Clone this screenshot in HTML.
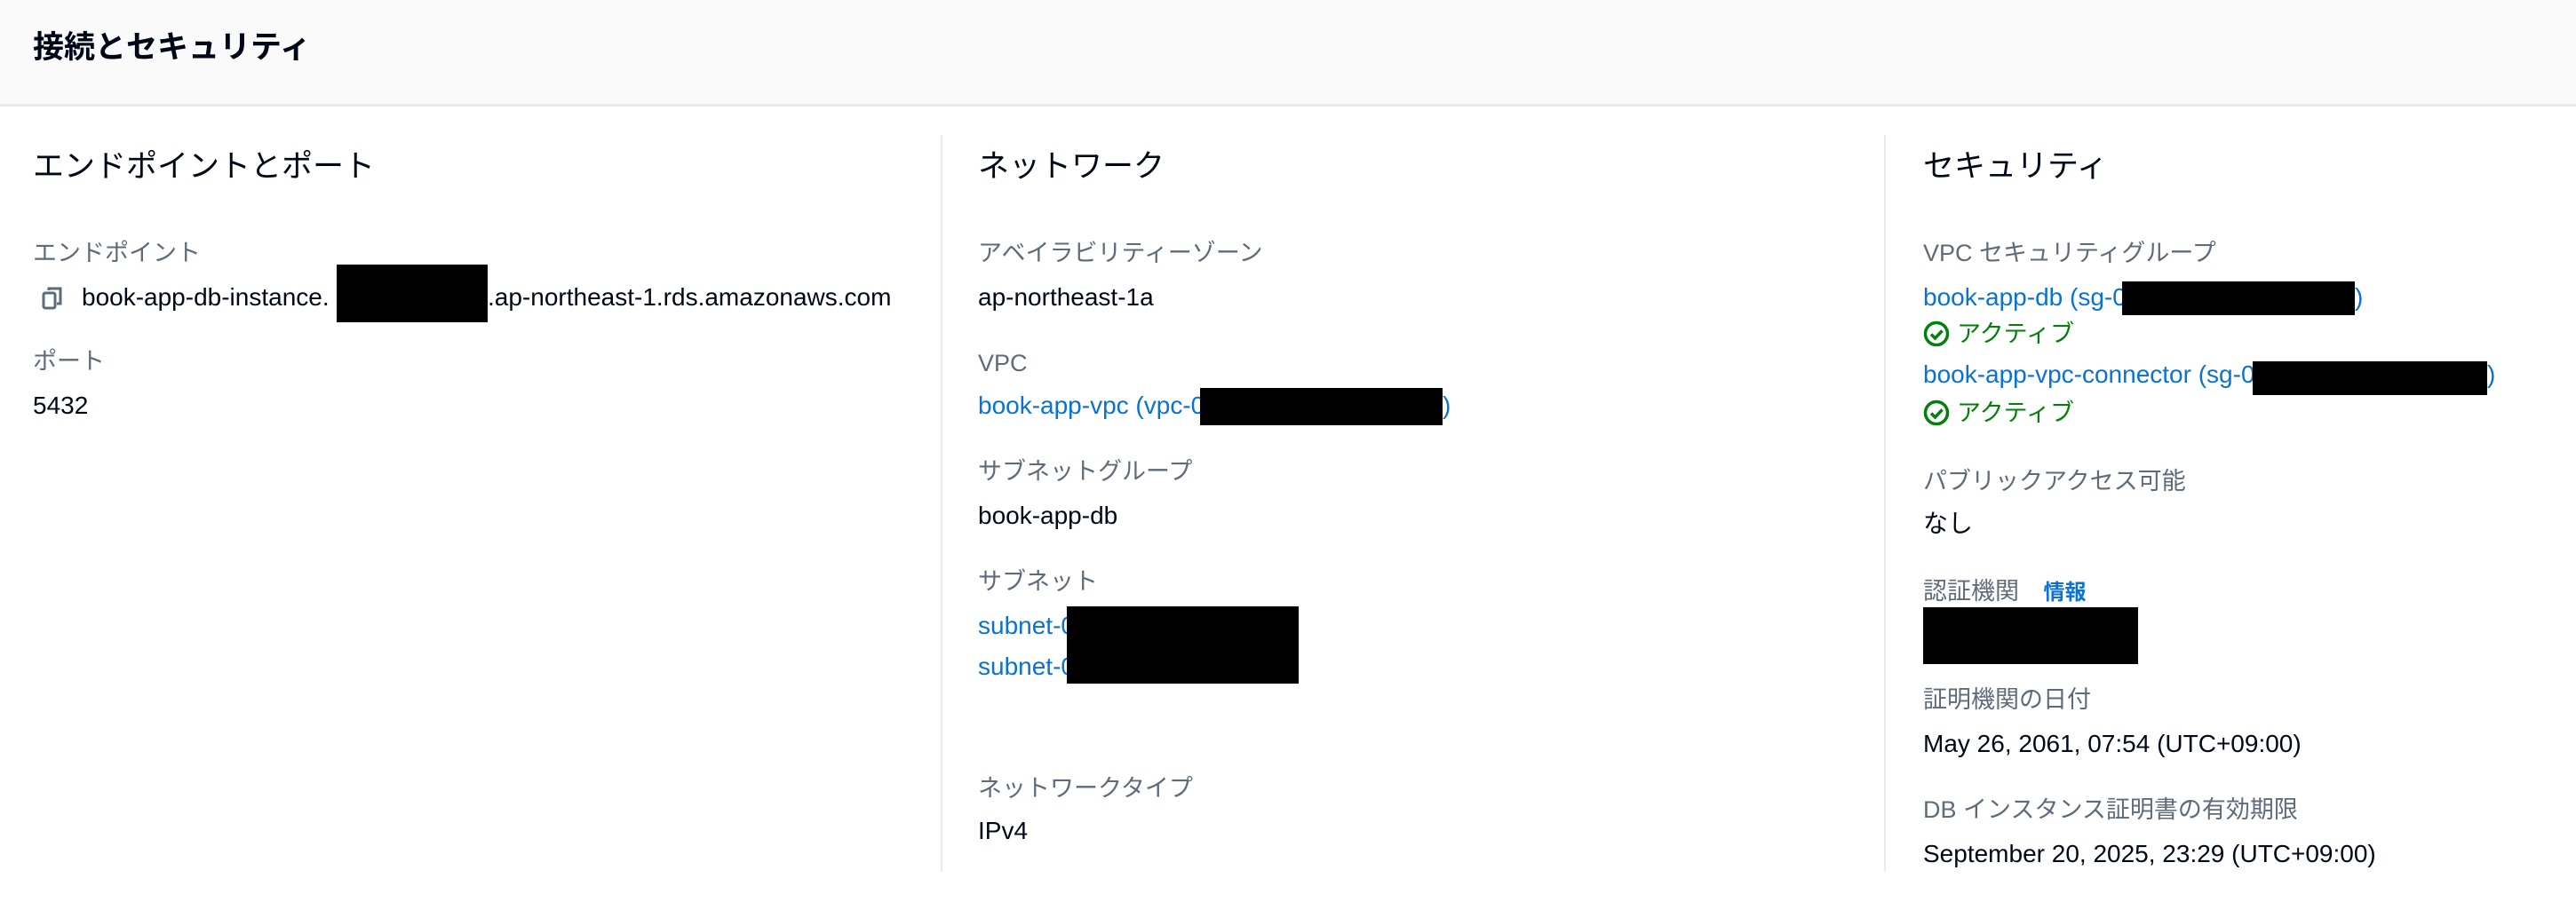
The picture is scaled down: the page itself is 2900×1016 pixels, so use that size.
<!DOCTYPE html>
<html><head><meta charset="utf-8"><style>
html,body{margin:0;padding:0;background:#fff;width:2900px;height:1016px;overflow:hidden;position:relative}
body{font-family:"Liberation Sans","Noto Sans CJK JP",sans-serif;color:#000716}
.hd{position:absolute;left:0;top:0;width:2900px;height:117px;background:#fafafa;border-bottom:3px solid #e9ebed}
.t{position:absolute;white-space:nowrap;line-height:40px}
.title{font-size:35px;font-weight:bold;left:37px;top:34px}
.h{font-size:35px;color:#000716}
.l{font-size:27px;color:#5f6b7a}
.v{font-size:28px;color:#000716}
.a{font-size:28px;color:#0972d3}
.g{font-size:27px;color:#037f0c}
.vl{position:absolute;width:2px;background:#e9ebed;top:152px;height:830px}
.bx{position:absolute;background:#000}
</style></head><body>
<div class="hd"></div>
<div class="t title">接続とセキュリティ</div>
<div class="vl" style="left:1059px"></div>
<div class="vl" style="left:2121px"></div>

<div class="t h" style="left:37px;top:168px">エンドポイントとポート</div>
<div class="t l" style="left:37px;top:265px">エンドポイント</div>
<svg style="position:absolute;left:46px;top:322px" width="26" height="28" viewBox="0 0 26 28"><rect x="3" y="8" width="13" height="17" rx="2" fill="none" stroke="#5f6b7a" stroke-width="3"/><path d="M9 5V3h13v17h-4" fill="none" stroke="#5f6b7a" stroke-width="3"/></svg>
<div class="t v" style="left:92px;top:315px">book-app-db-instance.</div>
<div class="bx" style="left:379px;top:298px;width:170px;height:65px"></div>
<div class="t v" style="left:549px;top:315px">.ap-northeast-1.rds.amazonaws.com</div>
<div class="t l" style="left:37px;top:387px">ポート</div>
<div class="t v" style="left:37px;top:437px">5432</div>

<div class="t h" style="left:1101px;top:168px">ネットワーク</div>
<div class="t l" style="left:1101px;top:265px">アベイラビリティーゾーン</div>
<div class="t v" style="left:1101px;top:315px">ap-northeast-1a</div>
<div class="t l" style="left:1101px;top:389px">VPC</div>
<div class="t a" style="left:1101px;top:437px">book-app-vpc (vpc-0</div>
<div class="bx" style="left:1351px;top:437px;width:273px;height:42px"></div>
<div class="t a" style="left:1624px;top:437px">)</div>
<div class="t l" style="left:1101px;top:511px">サブネットグループ</div>
<div class="t v" style="left:1101px;top:561px">book-app-db</div>
<div class="t l" style="left:1101px;top:635px">サブネット</div>
<div class="t a" style="left:1101px;top:685px">subnet-0</div>
<div class="t a" style="left:1101px;top:731px">subnet-0</div>
<div class="bx" style="left:1201px;top:683px;width:261px;height:87px"></div>
<div class="t l" style="left:1101px;top:868px">ネットワークタイプ</div>
<div class="t v" style="left:1101px;top:916px">IPv4</div>

<div class="t h" style="left:2165px;top:168px">セキュリティ</div>
<div class="t l" style="left:2165px;top:265px">VPC セキュリティグループ</div>
<div class="t a" style="left:2165px;top:315px">book-app-db (sg-0</div>
<div class="bx" style="left:2389px;top:317px;width:262px;height:38px"></div>
<div class="t a" style="left:2651px;top:315px">)</div>
<svg style="position:absolute;left:2165px;top:361px" width="30" height="30" viewBox="0 0 30 30"><circle cx="15" cy="15" r="12.5" fill="none" stroke="#037f0c" stroke-width="3.5"/><path d="M9 15.5l4.5 4.5 8-8.5" fill="none" stroke="#037f0c" stroke-width="3.5"/></svg>
<div class="t g" style="left:2203px;top:356px">アクティブ</div>
<div class="t a" style="left:2165px;top:402px">book-app-vpc-connector (sg-0</div>
<div class="bx" style="left:2536px;top:407px;width:264px;height:38px"></div>
<div class="t a" style="left:2800px;top:402px">)</div>
<svg style="position:absolute;left:2165px;top:450px" width="30" height="30" viewBox="0 0 30 30"><circle cx="15" cy="15" r="12.5" fill="none" stroke="#037f0c" stroke-width="3.5"/><path d="M9 15.5l4.5 4.5 8-8.5" fill="none" stroke="#037f0c" stroke-width="3.5"/></svg>
<div class="t g" style="left:2203px;top:445px">アクティブ</div>
<div class="t l" style="left:2165px;top:522px">パブリックアクセス可能</div>
<div class="t v" style="left:2165px;top:570px">なし</div>
<div class="t l" style="left:2165px;top:646px">認証機関 <span style="color:#0972d3;font-weight:bold;font-size:24px;margin-left:20px">情報</span></div>
<div class="bx" style="left:2165px;top:684px;width:242px;height:64px"></div>
<div class="t l" style="left:2165px;top:768px">証明機関の日付</div>
<div class="t v" style="left:2165px;top:818px">May 26, 2061, 07:54 (UTC+09:00)</div>
<div class="t l" style="left:2165px;top:892px">DB インスタンス証明書の有効期限</div>
<div class="t v" style="left:2165px;top:942px">September 20, 2025, 23:29 (UTC+09:00)</div>
</body></html>
